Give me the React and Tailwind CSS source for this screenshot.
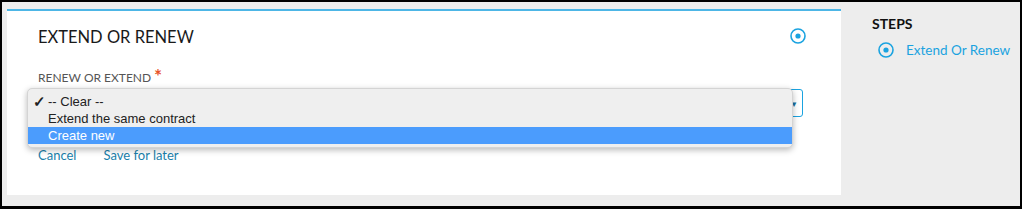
import React from "react";

function Radio({ className = "" }) {
  return (
    <svg width="16" height="16" viewBox="0 0 16 16" className={className}>
      <circle cx="8" cy="8" r="7" fill="none" stroke="#1aa3e0" strokeWidth="1.6" />
      <circle cx="8" cy="8" r="2.6" fill="#1aa3e0" />
    </svg>
  );
}

export default function App() {
  const sans = { fontFamily: "Lato, 'Open Sans', sans-serif" };
  const mac = { fontFamily: "'Liberation Sans', Arial, sans-serif" };
  return (
    <div className="w-[1022px] h-[209px] bg-[#ededed] border-black border-l-2 border-t-2 border-r-2 border-b-[3px] flex" style={sans}>
      <div className="ml-[5px] mt-[7px] w-[834px] h-[186px] bg-white border-t-2 border-[#4db6e6] relative pl-[31px] pr-[38px]">
        <div className="flex items-start justify-between pt-[15px]">
          <div className="text-[16.5px] leading-[22px] text-[#1a1a1a]">EXTEND OR RENEW</div>
          <Radio className="mt-[2px] -mr-[3px]" />
        </div>
        <div className="mt-[23px] flex items-start text-[12px] leading-[14px] text-[#555]">
          RENEW OR EXTEND
          <span className="text-[#e8542a] text-[19px] leading-[12px] ml-[3px] -mt-[1px] font-bold">*</span>
        </div>
        <div className="relative mt-[4px] h-[28px] w-[765px] border border-[#1aa3e0] rounded-[3px]">
          <span className="absolute right-[4px] top-[8px] text-[8px] text-[#1b6f9e]">▼</span>
        </div>
        <div className="flex gap-[27px] mt-[30px] text-[13px] leading-[16px] text-[#1a7fab]">
          <span>Cancel</span>
          <span>Save for later</span>
        </div>
        <div
          className="absolute left-[20px] top-[77px] w-[766px] bg-[#efefef] rounded-[5px] pt-[4px] pb-[3px] shadow-[0_2px_6px_rgba(0,0,0,0.28)] border border-[#d4d4d4] text-[13px] text-[#222]"
          style={mac}
        >
          <div className="h-[17px] leading-[17px] pl-[20px] relative">
            <span className="absolute left-[5px] top-0 text-[15px] font-bold">✓</span>
            -- Clear --
          </div>
          <div className="h-[17px] leading-[17px] pl-[20px]">Extend the same contract</div>
          <div className="h-[17px] leading-[17px] pl-[20px] bg-[#4b9cfd] text-white">Create new</div>
        </div>
      </div>
      <div className="pl-[31px] pt-[14px]">
        <div className="text-[14px] leading-[16px] font-bold text-[#111]">STEPS</div>
        <div className="flex items-center mt-[10px] ml-[6px]">
          <Radio />
          <span className="ml-[12px] text-[13.5px] leading-[16px] text-[#1aa3e0]">Extend Or Renew</span>
        </div>
      </div>
    </div>
  );
}
